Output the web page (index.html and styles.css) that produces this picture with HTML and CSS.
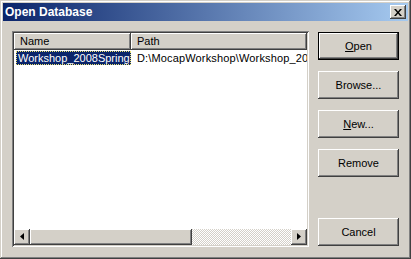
FILE: index.html
```html
<!DOCTYPE html>
<html>
<head>
<meta charset="utf-8">
<link rel="stylesheet" href="styles.css">
</head>
<body>
<div class="window">
  <div class="titlebar">
    <span class="title">Open Database</span>
    <button class="close" aria-label="Close">
      <svg width="8" height="7" viewBox="0 0 8 7"><path d="M0 0h2l2 2.5L6 0h2L5 3.5 8 7H6L4 4.5 2 7H0l3-3.5z" fill="#000"/></svg>
    </button>
  </div>
  <div class="content">
    <div class="list">
      <div class="header">
        <div class="hcell col-name">Name</div>
        <div class="hcell col-path">Path</div>
      </div>
      <div class="rows">
        <div class="row">
          <div class="cell col-name"><span class="sel">Workshop_2008Spring</span></div>
          <div class="cell col-path">D:\MocapWorkshop\Workshop_2008Spring</div>
        </div>
      </div>
      <div class="hscroll">
        <div class="sbtn"><svg width="4" height="7" viewBox="0 0 4 7"><path d="M4 0v7L0 3.5z" fill="#000"/></svg></div>
        <div class="thumb"></div>
        <div class="track"></div>
        <div class="sbtn"><svg width="4" height="7" viewBox="0 0 4 7"><path d="M0 0v7l4-3.5z" fill="#000"/></svg></div>
      </div>
    </div>
    <div class="buttons">
      <button class="btn default"><u>O</u>pen</button>
      <button class="btn">Browse...</button>
      <button class="btn"><u>N</u>ew...</button>
      <button class="btn">Remove</button>
      <button class="btn cancel">Cancel</button>
    </div>
  </div>
</div>
</body>
</html>
```
FILE: styles.css
```css
html, body {
  margin: 0;
  padding: 0;
  background: #d4d0c8;
}
.window {
  width: 411px;
  height: 259px;
  box-sizing: border-box;
  background: #d4d0c8;
  padding: 3px;
  box-shadow: inset -1px -1px #404040, inset 1px 1px #d4d0c8, inset -2px -2px #808080, inset 2px 2px #ffffff;
  font-family: "Liberation Sans", Arial, sans-serif;
  font-size: 11px;
  color: #000;
  display: flex;
  flex-direction: column;
}
.titlebar {
  height: 18px;
  background: linear-gradient(to right, #0a246a, #a6caf0);
  display: flex;
  align-items: center;
  justify-content: space-between;
  padding: 0 2px 0 2px;
}
.title {
  color: #fff;
  font-weight: bold;
  font-size: 12px;
  letter-spacing: 0;
}
.close {
  width: 16px;
  height: 14px;
  padding: 0;
  margin: 0;
  border: none;
  background: #d4d0c8;
  box-shadow: inset -1px -1px #404040, inset 1px 1px #ffffff, inset -2px -2px #808080;
  display: flex;
  align-items: center;
  justify-content: center;
}
.content {
  display: flex;
  padding: 10px 9px 0 9px;
  gap: 9px;
}
.list {
  width: 297px;
  height: 216px;
  box-sizing: border-box;
  padding: 2px;
  background: #fff;
  box-shadow: inset 1px 1px #808080, inset -1px -1px #ffffff, inset 2px 2px #404040, inset -2px -2px #d4d0c8;
  display: flex;
  flex-direction: column;
  overflow: hidden;
}
.header {
  display: flex;
  height: 17px;
  flex: none;
}
.hcell {
  box-sizing: border-box;
  height: 17px;
  background: #d4d0c8;
  box-shadow: inset -1px -1px #404040, inset 1px 1px #ffffff, inset -2px -2px #808080;
  padding: 2px 0 0 6px;
  white-space: nowrap;
  overflow: hidden;
}
.col-name {
  width: 117px;
  flex: none;
}
.col-path {
  flex: 1;
  min-width: 0;
}
.rows {
  flex: 1;
  padding-top: 1px;
}
.row {
  display: flex;
  height: 14px;
}
.cell {
  white-space: nowrap;
  overflow: hidden;
  box-sizing: border-box;
  line-height: 14px;
}
.cell.col-name {
  padding-left: 2px;
}
.cell.col-path {
  padding-left: 6px;
  letter-spacing: 0.15px;
}
.sel {
  display: inline-block;
  background: #0a246a;
  color: #fff;
  outline: 1px dotted #e8e070;
  outline-offset: -1px;
  padding: 0 1px 0 2px;
  height: 14px;
  line-height: 14px;
}
.hscroll {
  display: flex;
  height: 16px;
  flex: none;
}
.sbtn {
  width: 16px;
  height: 16px;
  flex: none;
  box-sizing: border-box;
  background: #d4d0c8;
  box-shadow: inset -1px -1px #404040, inset 1px 1px #ffffff, inset -2px -2px #808080;
  display: flex;
  align-items: center;
  justify-content: center;
  padding-bottom: 1px;
}
.thumb {
  width: 162px;
  flex: none;
  background: #d4d0c8;
  box-shadow: inset -1px -1px #404040, inset 1px 1px #ffffff, inset -2px -2px #808080;
}
.track {
  flex: 1;
  background-color: #d4d0c8;
  background-image: conic-gradient(#ffffff 25%, #d4d0c8 0 50%, #ffffff 0 75%, #d4d0c8 0);
  background-size: 2px 2px;
}
.buttons {
  width: 81px;
  height: 214px;
  display: flex;
  flex-direction: column;
  gap: 11px;
  padding-top: 1px;
}
.btn {
  width: 81px;
  height: 28px;
  margin: 0;
  padding: 0;
  border: none;
  background: #d4d0c8;
  font-family: "Liberation Sans", Arial, sans-serif;
  font-size: 11px;
  color: #000;
  box-shadow: inset -1px -1px #404040, inset 1px 1px #ffffff, inset -2px -2px #808080;
  flex: none;
}
.btn.default {
  box-shadow: inset 0 0 0 1px #000, inset -2px -2px #404040, inset 2px 2px #ffffff, inset -3px -3px #808080;
}
.btn u {
  text-decoration: underline;
}
.btn.cancel {
  margin-top: auto;
}
```
